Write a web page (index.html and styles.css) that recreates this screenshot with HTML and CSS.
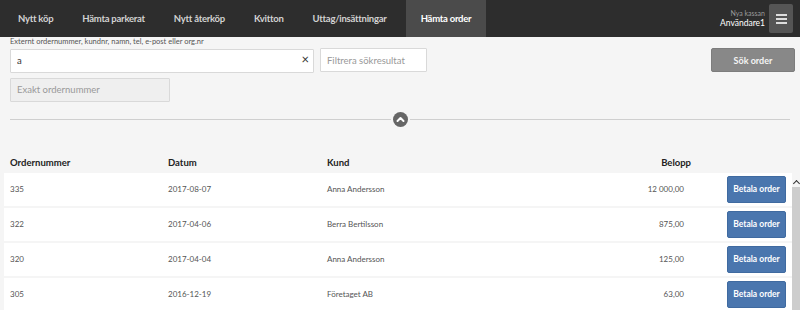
FILE: index.html
```html
<!DOCTYPE html>
<html lang="sv">
<head>
    <meta charset="UTF-8">
    <meta name="viewport" content="width=device-width, initial-scale=1.0">
    <title>Hämta order</title>
    <link rel="stylesheet" href="styles.css">
</head>
<body>
    <header class="topbar">
        <nav class="tabs">
            <a class="tab">Nytt köp</a>
            <a class="tab">Hämta parkerat</a>
            <a class="tab">Nytt återköp</a>
            <a class="tab">Kvitton</a>
            <a class="tab">Uttag/insättningar</a>
            <a class="tab active">Hämta order</a>
        </nav>
        <div class="user">
            <div class="user-text">
                <span class="register">Nya kassan</span>
                <span class="username">Användare1</span>
            </div>
            <button class="menu-button" aria-label="Meny">
                <svg width="11" height="10" viewBox="0 0 11 10">
                    <rect x="0" y="0" width="11" height="2" fill="#ddd"/>
                    <rect x="0" y="4" width="11" height="2" fill="#ddd"/>
                    <rect x="0" y="8" width="11" height="2" fill="#ddd"/>
                </svg>
            </button>
        </div>
    </header>

    <main class="content">
        <form class="search">
            <label class="search-label">Externt ordernummer, kundnr, namn, tel, e-post eller org.nr</label>
            <div class="search-row">
                <div class="input-wrap">
                    <input class="field main-field" type="text" value="a">
                    <span class="clear">×</span>
                </div>
                <input class="field filter-field" type="text" placeholder="Filtrera sökresultat">
                <button type="button" class="search-button">Sök order</button>
            </div>
            <input class="field exact-field" type="text" placeholder="Exakt ordernummer" disabled>
        </form>

        <div class="divider">
            <span class="line"></span>
            <svg class="collapse" width="15" height="15" viewBox="0 0 15 15">
                <circle cx="7.5" cy="7.5" r="7.5" fill="#666"/>
                <path d="M4.5 9 L7.5 6 L10.5 9" stroke="#fff" stroke-width="2" fill="none" stroke-linecap="round" stroke-linejoin="round"/>
            </svg>
            <span class="line"></span>
        </div>

        <div class="orders">
            <div class="order-head">
                <span>Ordernummer</span>
                <span>Datum</span>
                <span>Kund</span>
                <span class="amount-head">Belopp</span>
                <span></span>
            </div>
            <div class="order-body">
                <div class="order-list">
                    <div class="order-row">
                        <span>335</span>
                        <span>2017-08-07</span>
                        <span>Anna Andersson</span>
                        <span class="amount">12 000,00</span>
                        <button class="pay-button">Betala order</button>
                    </div>
                    <div class="order-row">
                        <span>322</span>
                        <span>2017-04-06</span>
                        <span>Berra Bertilsson</span>
                        <span class="amount">875,00</span>
                        <button class="pay-button">Betala order</button>
                    </div>
                    <div class="order-row">
                        <span>320</span>
                        <span>2017-04-04</span>
                        <span>Anna Andersson</span>
                        <span class="amount">125,00</span>
                        <button class="pay-button">Betala order</button>
                    </div>
                    <div class="order-row">
                        <span>305</span>
                        <span>2016-12-19</span>
                        <span>Företaget AB</span>
                        <span class="amount">63,00</span>
                        <button class="pay-button">Betala order</button>
                    </div>
                </div>
                <div class="scrollbar">
                    <span class="scroll-up"></span>
                    <span class="scroll-track"></span>
                </div>
            </div>
        </div>
    </main>
</body>
</html>
```

FILE: styles.css
```css
* {
    margin: 0;
    padding: 0;
    box-sizing: border-box;
    font-family: Lato, 'Open Sans', sans-serif;
}
body {
    background-color: #f5f5f5;
    height: 100vh;
    overflow: hidden;
}
.topbar {
    background-color: #2d2d2d;
    height: 37px;
    display: flex;
    align-items: stretch;
}
.tabs {
    display: flex;
    padding-left: 3.5px;
}
.tab {
    color: #d2d2d2;
    font-size: 9.5px;
    font-weight: bold;
    letter-spacing: -0.25px;
    padding: 0 14.5px;
    display: flex;
    align-items: center;
}
.tab.active {
    background-color: #4b4b4b;
    color: #fff;
    margin-left: 4.5px;
    padding: 0 15px;
}
.user {
    margin-left: auto;
    display: flex;
    align-items: center;
    padding-right: 7px;
}
.user-text {
    display: flex;
    flex-direction: column;
    align-items: flex-end;
    margin-right: 4px;
    line-height: 9px;
}
.register {
    color: #9a9a9a;
    font-size: 7px;
}
.username {
    color: #fff;
    font-size: 8.5px;
    margin-top: 1px;
}
.menu-button {
    width: 24px;
    height: 29px;
    background-color: #555;
    border: none;
    border-radius: 2px;
    display: flex;
    align-items: center;
    justify-content: center;
}
.content {
    padding: 0 5px 0 10px;
}
.search-label {
    display: block;
    font-size: 7.5px;
    color: #555;
    height: 9px;
    line-height: 9px;
    margin-bottom: 2px;
}
.search-row {
    display: flex;
    align-items: center;
}
.field {
    height: 24px;
    border: 1px solid #d9d9d9;
    border-radius: 1px;
    background: #fff;
    font-size: 9.5px;
    color: #333;
    padding: 0 6px;
    outline: none;
}
.field::placeholder {
    color: #999;
}
.input-wrap {
    position: relative;
}
.main-field {
    width: 304px;
}
.clear {
    position: absolute;
    right: 5px;
    top: 4px;
    font-size: 13px;
    color: #333;
    line-height: 14px;
}
.filter-field {
    width: 107px;
    margin-left: 6px;
}
.search-button {
    margin-left: auto;
    width: 84px;
    height: 24px;
    background-color: #888;
    border: 1px solid #7d7d7d;
    border-radius: 2px;
    color: #f4f4f4;
    font-size: 9px;
    font-weight: bold;
}
.exact-field {
    display: block;
    margin-top: 5px;
    width: 160px;
    background-color: #efefef;
}
.divider {
    display: flex;
    align-items: center;
    margin: 10px 5px 0 0;
    height: 15px;
}
.line {
    flex: 1;
    height: 1px;
    background-color: #cfcfcf;
}
.collapse {
    margin: 0 2px;
}
.orders {
    margin: 27px -5px 0 -6px;
}
.order-head,
.order-row {
    display: grid;
    grid-template-columns: 158px 159px 1fr 100px 101px;
    align-items: center;
    padding-left: 6px;
}
.order-head {
    font-size: 9.5px;
    font-weight: bold;
    color: #222;
    height: 18px;
    margin-bottom: 1px;
    margin-right: 8px;
}
.amount-head {
    text-align: right;
}
.order-body {
    display: flex;
}
.order-list {
    flex: 1;
}
.order-row {
    background-color: #fff;
    height: 33px;
    margin-bottom: 2px;
    font-size: 8px;
    color: #555;
}
.amount {
    text-align: right;
    padding-right: 7px;
}
.pay-button {
    justify-self: end;
    margin-right: 6px;
    width: 59px;
    height: 27px;
    background-color: #4a76ae;
    border: 1px solid #3f6aa0;
    border-radius: 2px;
    color: #fff;
    font-size: 8.5px;
    font-weight: bold;
}
.scrollbar {
    width: 8px;
    display: flex;
    flex-direction: column;
}
.scroll-up {
    height: 14px;
    position: relative;
}
.scroll-up::before {
    content: '';
    position: absolute;
    left: 2px;
    top: 8px;
    width: 4px;
    height: 4px;
    border-left: 1.5px solid #333;
    border-top: 1.5px solid #333;
    transform: rotate(45deg);
}
.scroll-track {
    flex: 1;
    background-color: #cdcdcd;
}
```
